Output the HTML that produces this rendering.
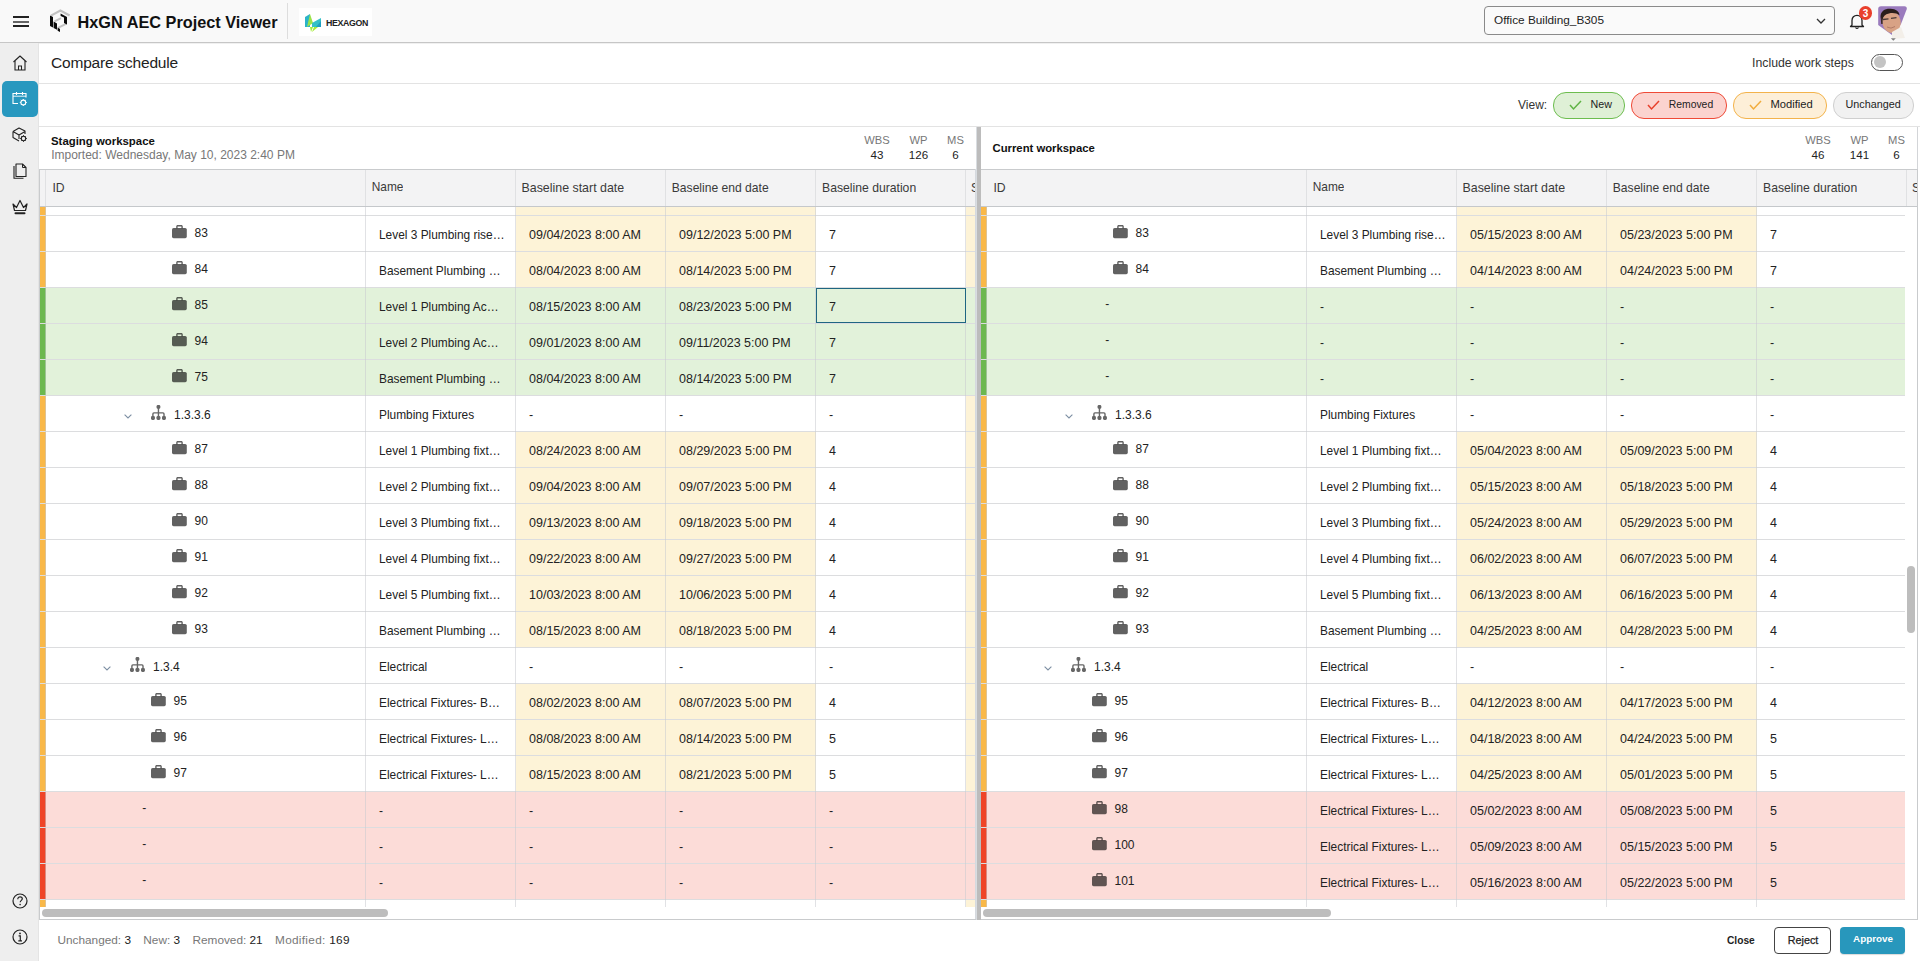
<!DOCTYPE html><html><head><meta charset="utf-8"><title>Compare schedule</title><style>
html,body{margin:0;padding:0;width:1920px;height:961px;overflow:hidden;background:#fff;font-family:"Liberation Sans", sans-serif;}
.t{position:absolute;white-space:nowrap;line-height:1;}
.r{position:absolute;}
svg{position:absolute;overflow:visible;}
</style></head><body>
<div class="r" style="left:0px;top:0px;width:1920px;height:42px;background:#f9f9f9;"></div>
<div class="r" style="left:0px;top:42px;width:1920px;height:1px;background:#c6c6c6;"></div>
<div class="r" style="left:0px;top:43px;width:1920px;height:1px;background:rgba(0,0,0,0.06);"></div>
<div class="r" style="left:13px;top:16px;width:16px;height:1.6px;background:#222;"></div>
<div class="r" style="left:13px;top:21px;width:16px;height:1.6px;background:#666;"></div>
<div class="r" style="left:13px;top:25px;width:16px;height:1.6px;background:#222;"></div>
<svg style="left:46px;top:6px" width="28" height="30" viewBox="0 0 28 30">
<polyline points="5,9.6 14.4,4.6 23.6,9.4" fill="none" stroke="#c2c2c2" stroke-width="2.2"/>
<line x1="8.5" y1="15.4" x2="15" y2="12.2" stroke="#c2c2c2" stroke-width="2"/>
<line x1="12" y1="21.8" x2="20.5" y2="17.6" stroke="#c2c2c2" stroke-width="2"/>
<polygon points="4,9.4 7,10.9 7,21.6 4,20.1" fill="#0a0a0a"/>
<polygon points="7.6,15.6 11,17.4 11,23.8 7.6,22.1" fill="#0a0a0a"/>
<polygon points="11.6,21.6 14,22.9 14,26 11.6,24.7" fill="#0a0a0a"/>
<polygon points="14.6,7.6 21,10.9 21,18.4 18,16.9 18,11.6 14.6,9.9" fill="#0a0a0a"/>
</svg>
<div class="t" style="left:77.5px;top:13.70px;font-size:16.3px;color:#111;font-weight:700;">HxGN AEC Project Viewer</div>
<div class="r" style="left:287px;top:3px;width:1px;height:36px;background:#dddddd;"></div>
<div class="r" style="left:299px;top:8px;width:73px;height:28px;background:#ffffff;"></div>
<svg style="left:305px;top:13px" width="17" height="19" viewBox="0 0 17 19">
<polygon points="0,4 5,1 5,14 0,14" fill="#2bb3c9"/>
<polygon points="5,1 2,14 8,10" fill="#9be34a"/>
<polygon points="7,10 16,5 16,14 7,14" fill="#35c0c8"/>
<polygon points="11,14 16,8 16,14" fill="#1e9fc2"/>
<polygon points="5,14 8,14 6,19" fill="#a6ec3a"/>
<polygon points="9,14 13,14 7,19" fill="#a6ec3a"/>
</svg>
<div class="t" style="left:326px;top:19.15px;font-size:8.8px;color:#222;font-weight:700;letter-spacing:-0.35px">HEXAGON</div>
<div class="r" style="left:1484px;top:6px;width:349px;height:27px;border:1.4px solid #8a8a8a;border-radius:4px;background:#fafafa"></div>
<div class="t" style="left:1494px;top:15.41px;font-size:11.8px;color:#222;font-weight:400;">Office Building_B305</div>
<svg style="left:1816px;top:18px" width="10" height="6" viewBox="0 0 10 6"><polyline points="1,1 5,5 9,1" fill="none" stroke="#333" stroke-width="1.3"/></svg>
<svg style="left:1849px;top:13px" width="16" height="17" viewBox="0 0 16 17">
<path d="M3,12 L3,7.5 C3,4.5 5,2.3 8,2.3 C11,2.3 13,4.5 13,7.5 L13,12 L14.5,13.5 L1.5,13.5 Z" fill="none" stroke="#222" stroke-width="1.3" stroke-linejoin="round"/>
<path d="M6.5,14.5 Q8,16.5 9.5,14.5" fill="none" stroke="#222" stroke-width="1.2"/>
</svg>
<div class="r" style="left:1859px;top:6px;width:13px;height:14px;border-radius:7px;background:#e9402c"></div>
<div class="t" style="left:1859.0px;width:13px;text-align:center;top:9.14px;font-size:10px;color:#fff;font-weight:700;">3</div>
<svg style="left:1872px;top:2px" width="40" height="40" viewBox="0 0 40 40">
<path d="M6.2,7 Q6.2,4.2 9,4.2 L32.5,4.2 Q35,4.2 34.8,7 L29,22 L20,33 L6.2,23 Z" fill="#9a7bbd"/>
<ellipse cx="19.5" cy="20" rx="9.2" ry="11" transform="rotate(-12 19.5 20)" fill="#d8a285"/>
<path d="M8.5,15 C8.5,9 13,6.5 18.5,6.8 C24,7 27.5,9.5 27.5,13.5 C25,11.3 21,10.6 17,11.5 C13,12.3 11,14.5 10.5,18 Z" fill="#2a1e1b"/>
<path d="M8.6,15 L9.2,22 L10.6,22 L10.6,16 Z" fill="#3a2a26"/>
<path d="M11,17.5 L16.5,16.8 M19,16.3 L24.5,15.6" stroke="#4a3a36" stroke-width="1.3"/>
<path d="M15,25 Q19,27.5 23,24.5" stroke="#b07a66" stroke-width="1" fill="none"/>
<path d="M20,30 L29,25 L33,36 L20,37 Z" fill="#f3efe9"/>
<polygon points="18.8,36.2 23.8,36.2 21.3,38.8" fill="#808080"/>
</svg>
<div class="r" style="left:0px;top:43px;width:39px;height:918px;background:#eeeeee;"></div>
<div class="r" style="left:38px;top:43px;width:1px;height:918px;background:#e4e4e4;"></div>
<svg style="left:12px;top:55px" width="16" height="16" viewBox="0 0 16 16">
<path d="M1.5,7 L8,1 L14.5,7" fill="none" stroke="#222" stroke-width="1.1" stroke-linejoin="round"/>
<path d="M3,6 L3,15 L13,15 L13,6" fill="none" stroke="#222" stroke-width="1.1"/>
<path d="M6.5,15 L6.5,11 L9.5,11 L9.5,15" fill="none" stroke="#222" stroke-width="1.05"/>
</svg>
<div class="r" style="left:2px;top:81px;width:36px;height:36px;border-radius:5px;background:#2898bf"></div>
<svg style="left:12px;top:91px" width="16" height="16" viewBox="0 0 16 16">
<path d="M6,12.5 L1,12.5 L1,2.5 L14,2.5 L14,6.5" fill="none" stroke="#fff" stroke-width="1.1"/>
<path d="M1,5.2 L14,5.2" stroke="#fff" stroke-width="0.9"/>
<path d="M4.5,1 L4.5,4 M10.5,1 L10.5,4" stroke="#fff" stroke-width="1.1"/>
<circle cx="11.3" cy="11.5" r="2.4" fill="none" stroke="#fff" stroke-width="1.1"/>
<path d="M11.3,8 L11.3,9 M11.3,14 L11.3,15 M7.8,11.5 L8.8,11.5 M13.8,11.5 L14.8,11.5 M8.8,9 L9.5,9.7 M13.1,13.3 L13.8,14 M8.8,14 L9.5,13.3 M13.1,9.7 L13.8,9" stroke="#fff" stroke-width="1"/>
</svg>
<svg style="left:12px;top:127px" width="16" height="16" viewBox="0 0 16 16">
<path d="M1,4.5 L7,1 L13,4 L13,7 M1,4.5 L1,10.5 L7,14 M1,4.5 L7,8 L13,4.5 M7,8 L7,12" fill="none" stroke="#222" stroke-width="1.1" stroke-linejoin="round"/>
<circle cx="11.5" cy="11.5" r="2.2" fill="none" stroke="#222" stroke-width="1.1"/>
<path d="M11.5,8.2 L11.5,9.1 M11.5,13.9 L11.5,14.8 M8.2,11.5 L9.1,11.5 M13.9,11.5 L14.8,11.5 M9.2,9.2 L9.8,9.8 M13.2,13.2 L13.8,13.8 M9.2,13.8 L9.8,13.2 M13.2,9.8 L13.8,9.2" stroke="#222" stroke-width="1"/>
</svg>
<svg style="left:13px;top:163px" width="14" height="16" viewBox="0 0 14 16">
<path d="M3,1 L9.5,1 L13,4.5 L13,13.5 L3,13.5 Z" fill="none" stroke="#222" stroke-width="1.1" stroke-linejoin="round"/>
<path d="M9.5,1 L9.5,4.5 L13,4.5" fill="none" stroke="#222" stroke-width="1"/>
<path d="M1,3 L1,15.2 L10.5,15.2" fill="none" stroke="#222" stroke-width="1.1"/>
</svg>
<svg style="left:12px;top:199px" width="16" height="16" viewBox="0 0 16 16">
<path d="M1,5 L4.5,8.5 L8,1.5 L11.5,8.5 L15,5 L13.5,11.5 L2.5,11.5 Z" fill="none" stroke="#222" stroke-width="1.2" stroke-linejoin="round"/>
<rect x="2.5" y="13.2" width="11" height="2" rx="1" fill="#222"/>
</svg>
<svg style="left:12px;top:893px" width="16" height="16" viewBox="0 0 16 16">
<circle cx="8" cy="8" r="7" fill="none" stroke="#222" stroke-width="1.2"/>
<path d="M5.8,6.2 C5.8,4.6 6.9,3.8 8.1,3.8 C9.4,3.8 10.3,4.7 10.3,5.8 C10.3,7.3 8.2,7.5 8.2,9.3" fill="none" stroke="#222" stroke-width="1.2"/>
<circle cx="8.1" cy="11.6" r="0.8" fill="#222"/>
</svg>
<svg style="left:12px;top:929px" width="16" height="16" viewBox="0 0 16 16">
<circle cx="8" cy="8" r="7" fill="none" stroke="#222" stroke-width="1.2"/>
<circle cx="8" cy="4.4" r="0.9" fill="#222"/>
<path d="M6.6,6.8 L8.3,6.8 L8.3,11.6 M6.3,11.8 L10,11.8" fill="none" stroke="#222" stroke-width="1.2"/>
</svg>
<div class="t" style="left:51px;top:54.68px;font-size:15.5px;color:#222;font-weight:400;letter-spacing:-0.2px">Compare schedule</div>
<div class="t" style="left:1752px;top:56.89px;font-size:12.3px;color:#333;font-weight:400;">Include work steps</div>
<div class="r" style="left:1871px;top:54px;width:30px;height:15px;border:1px solid #555;border-radius:9px;background:#fff"></div>
<div class="r" style="left:1874px;top:56px;width:12px;height:12px;border-radius:6px;background:#c4c4c4"></div>
<div class="r" style="left:39px;top:83px;width:1881px;height:1px;background:#e3e3e3;"></div>
<div class="t" style="left:1518px;top:98.84px;font-size:12px;color:#333;font-weight:400;">View:</div>
<div class="r" style="left:1553px;top:92px;width:70px;height:25px;border:1px solid #6dbd4f;border-radius:13px;background:#dff0d6;box-sizing:content-box"></div>
<svg style="left:1569px;top:100px" width="13" height="10" viewBox="0 0 13 10"><polyline points="1,5 4.5,9 12,1" fill="none" stroke="#5fb344" stroke-width="1.5"/></svg>
<div class="t" style="left:1590.6px;top:98.94px;font-size:10.7px;color:#222;font-weight:400;">New</div>
<div class="r" style="left:1631px;top:92px;width:94px;height:25px;border:1px solid #ef4a37;border-radius:13px;background:#fbd3cf;box-sizing:content-box"></div>
<svg style="left:1647px;top:100px" width="13" height="10" viewBox="0 0 13 10"><polyline points="1,5 4.5,9 12,1" fill="none" stroke="#e8402c" stroke-width="1.5"/></svg>
<div class="t" style="left:1668.7px;top:100.00px;font-size:10.4px;color:#222;font-weight:400;">Removed</div>
<div class="r" style="left:1733px;top:92px;width:92px;height:25px;border:1px solid #f3b34b;border-radius:13px;background:#fdefd8;box-sizing:content-box"></div>
<svg style="left:1749px;top:100px" width="13" height="10" viewBox="0 0 13 10"><polyline points="1,5 4.5,9 12,1" fill="none" stroke="#f1ac3c" stroke-width="1.5"/></svg>
<div class="t" style="left:1770.5px;top:98.82px;font-size:11.2px;color:#222;font-weight:400;">Modified</div>
<div class="r" style="left:1833px;top:92px;width:79px;height:25px;border:1px solid #cfcfcf;border-radius:13px;background:#f1f1f1;box-sizing:content-box"></div>
<div class="t" style="left:1845.5px;top:98.86px;font-size:10.8px;color:#222;font-weight:400;">Unchanged</div>
<div class="r" style="left:39px;top:126px;width:1881px;height:1px;background:#e3e3e3;"></div>
<div class="t" style="left:51px;top:136.35px;font-size:11.4px;color:#111;font-weight:700;">Staging workspace</div>
<div class="t" style="left:51.2px;top:149.34px;font-size:12px;color:#777;font-weight:400;">Imported: Wednesday, May 10, 2023 2:40 PM</div>
<div class="t" style="left:857.0px;width:40px;text-align:center;top:135.12px;font-size:11.2px;color:#777;font-weight:400;">WBS</div>
<div class="t" style="left:857.0px;width:40px;text-align:center;top:148.98px;font-size:11.6px;color:#222;font-weight:400;">43</div>
<div class="t" style="left:898.5px;width:40px;text-align:center;top:135.12px;font-size:11.2px;color:#777;font-weight:400;">WP</div>
<div class="t" style="left:898.5px;width:40px;text-align:center;top:148.98px;font-size:11.6px;color:#222;font-weight:400;">126</div>
<div class="t" style="left:935.5px;width:40px;text-align:center;top:135.12px;font-size:11.2px;color:#777;font-weight:400;">MS</div>
<div class="t" style="left:935.5px;width:40px;text-align:center;top:148.98px;font-size:11.6px;color:#222;font-weight:400;">6</div>
<div class="t" style="left:992.5px;top:143.03px;font-size:11.3px;color:#111;font-weight:700;">Current workspace</div>
<div class="t" style="left:1798.0px;width:40px;text-align:center;top:135.12px;font-size:11.2px;color:#777;font-weight:400;">WBS</div>
<div class="t" style="left:1798.0px;width:40px;text-align:center;top:148.98px;font-size:11.6px;color:#222;font-weight:400;">46</div>
<div class="t" style="left:1839.5px;width:40px;text-align:center;top:135.12px;font-size:11.2px;color:#777;font-weight:400;">WP</div>
<div class="t" style="left:1839.5px;width:40px;text-align:center;top:148.98px;font-size:11.6px;color:#222;font-weight:400;">141</div>
<div class="t" style="left:1876.5px;width:40px;text-align:center;top:135.12px;font-size:11.2px;color:#777;font-weight:400;">MS</div>
<div class="t" style="left:1876.5px;width:40px;text-align:center;top:148.98px;font-size:11.6px;color:#222;font-weight:400;">6</div>
<div class="r" style="left:39px;top:169px;width:937px;height:1px;background:#c9cbcd;"></div>
<div class="r" style="left:40px;top:170px;width:935px;height:36px;background:#f3f3f4;"></div>
<div class="r" style="left:39px;top:206px;width:937px;height:1px;background:#c5c8cb;"></div>
<div class="r" style="left:45px;top:170px;width:1px;height:36px;background:#e0e1e3;"></div>
<div class="r" style="left:365px;top:170px;width:1px;height:36px;background:#e0e1e3;"></div>
<div class="r" style="left:515px;top:170px;width:1px;height:36px;background:#e0e1e3;"></div>
<div class="r" style="left:665px;top:170px;width:1px;height:36px;background:#e0e1e3;"></div>
<div class="r" style="left:815px;top:170px;width:1px;height:36px;background:#e0e1e3;"></div>
<div class="r" style="left:965px;top:170px;width:1px;height:36px;background:#e0e1e3;"></div>
<div class="t" style="left:52.4px;top:181.67px;font-size:12.2px;color:#3a3a3a;font-weight:400;overflow:hidden;max-width:922.6px">ID</div>
<div class="t" style="left:371.7px;top:181.93px;font-size:11.9px;color:#3a3a3a;font-weight:400;overflow:hidden;max-width:603.3px">Name</div>
<div class="t" style="left:521.5px;top:181.50px;font-size:12.4px;color:#3a3a3a;font-weight:400;overflow:hidden;max-width:453.5px">Baseline start date</div>
<div class="t" style="left:671.8px;top:181.76px;font-size:12.1px;color:#3a3a3a;font-weight:400;overflow:hidden;max-width:303.20000000000005px">Baseline end date</div>
<div class="t" style="left:822px;top:181.67px;font-size:12.2px;color:#3a3a3a;font-weight:400;overflow:hidden;max-width:153px">Baseline duration</div>
<div class="t" style="left:971px;top:181.67px;font-size:12.2px;color:#3a3a3a;font-weight:400;overflow:hidden;max-width:4px">Start</div>
<div class="r" style="left:40px;top:207px;width:6px;height:8px;background:#f9b848;"></div>
<div class="r" style="left:516px;top:207px;width:300px;height:8px;background:#fdf3d7;"></div>
<div class="r" style="left:966px;top:207px;width:10px;height:8px;background:#fdf3d7;"></div>
<div class="r" style="left:40px;top:215px;width:936px;height:1px;background:#dcdddf;"></div>
<div class="r" style="left:40px;top:216px;width:6px;height:35px;background:#f9b848;"></div>
<div class="r" style="left:516px;top:216px;width:300px;height:35px;background:#fdf3d7;"></div>
<div class="r" style="left:966px;top:216px;width:10px;height:35px;background:#fdf3d7;"></div>
<div class="r" style="left:40px;top:251px;width:936px;height:1px;background:#dcdddf;"></div>
<svg style="left:171.6px;top:225.4px" width="15" height="14" viewBox="0 0 15 14"><path d="M4.2,3.2 L4.2,1.6 C4.2,0.6 4.8,0 5.8,0 L9.2,0 C10.2,0 10.8,0.6 10.8,1.6 L10.8,3.2 L9.4,3.2 L9.4,1.4 L5.6,1.4 L5.6,3.2 Z" fill="rgba(0,0,0,0.62)"/><rect x="0" y="2.9" width="14.8" height="10.3" rx="1.6" fill="rgba(0,0,0,0.62)"/></svg>
<div class="t" style="left:194.5px;top:226.64px;font-size:12px;color:#222;font-weight:400;">83</div>
<div class="t" style="left:379px;top:229.93px;font-size:11.9px;color:#222;font-weight:400;">Level 3 Plumbing rise…</div>
<div class="t" style="left:529px;top:228.62px;font-size:12.5px;color:#222;font-weight:400;">09/04/2023 8:00 AM</div>
<div class="t" style="left:679px;top:228.62px;font-size:12.5px;color:#222;font-weight:400;">09/12/2023 5:00 PM</div>
<div class="t" style="left:829px;top:228.62px;font-size:12.5px;color:#222;font-weight:400;">7</div>
<div class="r" style="left:40px;top:252px;width:6px;height:35px;background:#f9b848;"></div>
<div class="r" style="left:516px;top:252px;width:300px;height:35px;background:#fdf3d7;"></div>
<div class="r" style="left:966px;top:252px;width:10px;height:35px;background:#fdf3d7;"></div>
<div class="r" style="left:40px;top:287px;width:936px;height:1px;background:#dcdddf;"></div>
<svg style="left:171.6px;top:261.4px" width="15" height="14" viewBox="0 0 15 14"><path d="M4.2,3.2 L4.2,1.6 C4.2,0.6 4.8,0 5.8,0 L9.2,0 C10.2,0 10.8,0.6 10.8,1.6 L10.8,3.2 L9.4,3.2 L9.4,1.4 L5.6,1.4 L5.6,3.2 Z" fill="rgba(0,0,0,0.62)"/><rect x="0" y="2.9" width="14.8" height="10.3" rx="1.6" fill="rgba(0,0,0,0.62)"/></svg>
<div class="t" style="left:194.5px;top:262.64px;font-size:12px;color:#222;font-weight:400;">84</div>
<div class="t" style="left:379px;top:265.93px;font-size:11.9px;color:#222;font-weight:400;">Basement Plumbing …</div>
<div class="t" style="left:529px;top:264.62px;font-size:12.5px;color:#222;font-weight:400;">08/04/2023 8:00 AM</div>
<div class="t" style="left:679px;top:264.62px;font-size:12.5px;color:#222;font-weight:400;">08/14/2023 5:00 PM</div>
<div class="t" style="left:829px;top:264.62px;font-size:12.5px;color:#222;font-weight:400;">7</div>
<div class="r" style="left:40px;top:288px;width:936px;height:35px;background:#e2f2da;"></div>
<div class="r" style="left:40px;top:288px;width:6px;height:35px;background:#6cb84f;"></div>
<div class="r" style="left:40px;top:323px;width:936px;height:1px;background:#dcdddf;"></div>
<svg style="left:171.6px;top:297.4px" width="15" height="14" viewBox="0 0 15 14"><path d="M4.2,3.2 L4.2,1.6 C4.2,0.6 4.8,0 5.8,0 L9.2,0 C10.2,0 10.8,0.6 10.8,1.6 L10.8,3.2 L9.4,3.2 L9.4,1.4 L5.6,1.4 L5.6,3.2 Z" fill="rgba(0,0,0,0.62)"/><rect x="0" y="2.9" width="14.8" height="10.3" rx="1.6" fill="rgba(0,0,0,0.62)"/></svg>
<div class="t" style="left:194.5px;top:298.64px;font-size:12px;color:#222;font-weight:400;">85</div>
<div class="t" style="left:379px;top:301.93px;font-size:11.9px;color:#222;font-weight:400;">Level 1 Plumbing Ac…</div>
<div class="t" style="left:529px;top:300.62px;font-size:12.5px;color:#222;font-weight:400;">08/15/2023 8:00 AM</div>
<div class="t" style="left:679px;top:300.62px;font-size:12.5px;color:#222;font-weight:400;">08/23/2023 5:00 PM</div>
<div class="t" style="left:829px;top:300.62px;font-size:12.5px;color:#222;font-weight:400;">7</div>
<div class="r" style="left:40px;top:324px;width:936px;height:35px;background:#e2f2da;"></div>
<div class="r" style="left:40px;top:324px;width:6px;height:35px;background:#6cb84f;"></div>
<div class="r" style="left:40px;top:359px;width:936px;height:1px;background:#dcdddf;"></div>
<svg style="left:171.6px;top:333.4px" width="15" height="14" viewBox="0 0 15 14"><path d="M4.2,3.2 L4.2,1.6 C4.2,0.6 4.8,0 5.8,0 L9.2,0 C10.2,0 10.8,0.6 10.8,1.6 L10.8,3.2 L9.4,3.2 L9.4,1.4 L5.6,1.4 L5.6,3.2 Z" fill="rgba(0,0,0,0.62)"/><rect x="0" y="2.9" width="14.8" height="10.3" rx="1.6" fill="rgba(0,0,0,0.62)"/></svg>
<div class="t" style="left:194.5px;top:334.64px;font-size:12px;color:#222;font-weight:400;">94</div>
<div class="t" style="left:379px;top:337.93px;font-size:11.9px;color:#222;font-weight:400;">Level 2 Plumbing Ac…</div>
<div class="t" style="left:529px;top:336.62px;font-size:12.5px;color:#222;font-weight:400;">09/01/2023 8:00 AM</div>
<div class="t" style="left:679px;top:336.62px;font-size:12.5px;color:#222;font-weight:400;">09/11/2023 5:00 PM</div>
<div class="t" style="left:829px;top:336.62px;font-size:12.5px;color:#222;font-weight:400;">7</div>
<div class="r" style="left:40px;top:360px;width:936px;height:35px;background:#e2f2da;"></div>
<div class="r" style="left:40px;top:360px;width:6px;height:35px;background:#6cb84f;"></div>
<div class="r" style="left:40px;top:395px;width:936px;height:1px;background:#dcdddf;"></div>
<svg style="left:171.6px;top:369.4px" width="15" height="14" viewBox="0 0 15 14"><path d="M4.2,3.2 L4.2,1.6 C4.2,0.6 4.8,0 5.8,0 L9.2,0 C10.2,0 10.8,0.6 10.8,1.6 L10.8,3.2 L9.4,3.2 L9.4,1.4 L5.6,1.4 L5.6,3.2 Z" fill="rgba(0,0,0,0.62)"/><rect x="0" y="2.9" width="14.8" height="10.3" rx="1.6" fill="rgba(0,0,0,0.62)"/></svg>
<div class="t" style="left:194.5px;top:370.64px;font-size:12px;color:#222;font-weight:400;">75</div>
<div class="t" style="left:379px;top:373.93px;font-size:11.9px;color:#222;font-weight:400;">Basement Plumbing …</div>
<div class="t" style="left:529px;top:372.62px;font-size:12.5px;color:#222;font-weight:400;">08/04/2023 8:00 AM</div>
<div class="t" style="left:679px;top:372.62px;font-size:12.5px;color:#222;font-weight:400;">08/14/2023 5:00 PM</div>
<div class="t" style="left:829px;top:372.62px;font-size:12.5px;color:#222;font-weight:400;">7</div>
<div class="r" style="left:40px;top:396px;width:6px;height:35px;background:#f9b848;"></div>
<div class="r" style="left:966px;top:396px;width:10px;height:35px;background:#fdf3d7;"></div>
<div class="r" style="left:40px;top:431px;width:936px;height:1px;background:#dcdddf;"></div>
<svg style="left:124.3px;top:413.6px" width="8" height="5" viewBox="0 0 8 5"><polyline points="0.6,0.6 4,4 7.4,0.6" fill="none" stroke="#7d8fa3" stroke-width="1.1"/></svg>
<svg style="left:150.5px;top:405.4px" width="16" height="16" viewBox="0 0 16 16"><rect x="5.6" y="0" width="3.7" height="3.7" rx="1.3" fill="#666"/><rect x="6.75" y="2" width="1.4" height="10" fill="#666"/><path d="M1.9,11.5 L1.9,8.9 Q1.9,7.9 2.9,7.9 L12,7.9 Q13,7.9 13,8.9 L13,11.5" fill="none" stroke="#666" stroke-width="1.4"/><rect x="0" y="11" width="3.9" height="3.9" rx="1.3" fill="#666"/><rect x="5.5" y="11" width="3.9" height="3.9" rx="1.3" fill="#666"/><rect x="11" y="11" width="3.9" height="3.9" rx="1.3" fill="#666"/></svg>
<div class="t" style="left:174px;top:408.84px;font-size:12px;color:#222;font-weight:400;">1.3.3.6</div>
<div class="t" style="left:379px;top:409.93px;font-size:11.9px;color:#222;font-weight:400;">Plumbing Fixtures</div>
<div class="t" style="left:529px;top:408.62px;font-size:12.5px;color:#222;font-weight:400;">-</div>
<div class="t" style="left:679px;top:408.62px;font-size:12.5px;color:#222;font-weight:400;">-</div>
<div class="t" style="left:829px;top:408.62px;font-size:12.5px;color:#222;font-weight:400;">-</div>
<div class="r" style="left:40px;top:432px;width:6px;height:35px;background:#f9b848;"></div>
<div class="r" style="left:516px;top:432px;width:300px;height:35px;background:#fdf3d7;"></div>
<div class="r" style="left:966px;top:432px;width:10px;height:35px;background:#fdf3d7;"></div>
<div class="r" style="left:40px;top:467px;width:936px;height:1px;background:#dcdddf;"></div>
<svg style="left:171.6px;top:441.4px" width="15" height="14" viewBox="0 0 15 14"><path d="M4.2,3.2 L4.2,1.6 C4.2,0.6 4.8,0 5.8,0 L9.2,0 C10.2,0 10.8,0.6 10.8,1.6 L10.8,3.2 L9.4,3.2 L9.4,1.4 L5.6,1.4 L5.6,3.2 Z" fill="rgba(0,0,0,0.62)"/><rect x="0" y="2.9" width="14.8" height="10.3" rx="1.6" fill="rgba(0,0,0,0.62)"/></svg>
<div class="t" style="left:194.5px;top:442.64px;font-size:12px;color:#222;font-weight:400;">87</div>
<div class="t" style="left:379px;top:445.93px;font-size:11.9px;color:#222;font-weight:400;">Level 1 Plumbing fixt…</div>
<div class="t" style="left:529px;top:444.62px;font-size:12.5px;color:#222;font-weight:400;">08/24/2023 8:00 AM</div>
<div class="t" style="left:679px;top:444.62px;font-size:12.5px;color:#222;font-weight:400;">08/29/2023 5:00 PM</div>
<div class="t" style="left:829px;top:444.62px;font-size:12.5px;color:#222;font-weight:400;">4</div>
<div class="r" style="left:40px;top:468px;width:6px;height:35px;background:#f9b848;"></div>
<div class="r" style="left:516px;top:468px;width:300px;height:35px;background:#fdf3d7;"></div>
<div class="r" style="left:966px;top:468px;width:10px;height:35px;background:#fdf3d7;"></div>
<div class="r" style="left:40px;top:503px;width:936px;height:1px;background:#dcdddf;"></div>
<svg style="left:171.6px;top:477.4px" width="15" height="14" viewBox="0 0 15 14"><path d="M4.2,3.2 L4.2,1.6 C4.2,0.6 4.8,0 5.8,0 L9.2,0 C10.2,0 10.8,0.6 10.8,1.6 L10.8,3.2 L9.4,3.2 L9.4,1.4 L5.6,1.4 L5.6,3.2 Z" fill="rgba(0,0,0,0.62)"/><rect x="0" y="2.9" width="14.8" height="10.3" rx="1.6" fill="rgba(0,0,0,0.62)"/></svg>
<div class="t" style="left:194.5px;top:478.64px;font-size:12px;color:#222;font-weight:400;">88</div>
<div class="t" style="left:379px;top:481.93px;font-size:11.9px;color:#222;font-weight:400;">Level 2 Plumbing fixt…</div>
<div class="t" style="left:529px;top:480.62px;font-size:12.5px;color:#222;font-weight:400;">09/04/2023 8:00 AM</div>
<div class="t" style="left:679px;top:480.62px;font-size:12.5px;color:#222;font-weight:400;">09/07/2023 5:00 PM</div>
<div class="t" style="left:829px;top:480.62px;font-size:12.5px;color:#222;font-weight:400;">4</div>
<div class="r" style="left:40px;top:504px;width:6px;height:35px;background:#f9b848;"></div>
<div class="r" style="left:516px;top:504px;width:300px;height:35px;background:#fdf3d7;"></div>
<div class="r" style="left:966px;top:504px;width:10px;height:35px;background:#fdf3d7;"></div>
<div class="r" style="left:40px;top:539px;width:936px;height:1px;background:#dcdddf;"></div>
<svg style="left:171.6px;top:513.4px" width="15" height="14" viewBox="0 0 15 14"><path d="M4.2,3.2 L4.2,1.6 C4.2,0.6 4.8,0 5.8,0 L9.2,0 C10.2,0 10.8,0.6 10.8,1.6 L10.8,3.2 L9.4,3.2 L9.4,1.4 L5.6,1.4 L5.6,3.2 Z" fill="rgba(0,0,0,0.62)"/><rect x="0" y="2.9" width="14.8" height="10.3" rx="1.6" fill="rgba(0,0,0,0.62)"/></svg>
<div class="t" style="left:194.5px;top:514.64px;font-size:12px;color:#222;font-weight:400;">90</div>
<div class="t" style="left:379px;top:517.93px;font-size:11.9px;color:#222;font-weight:400;">Level 3 Plumbing fixt…</div>
<div class="t" style="left:529px;top:516.62px;font-size:12.5px;color:#222;font-weight:400;">09/13/2023 8:00 AM</div>
<div class="t" style="left:679px;top:516.62px;font-size:12.5px;color:#222;font-weight:400;">09/18/2023 5:00 PM</div>
<div class="t" style="left:829px;top:516.62px;font-size:12.5px;color:#222;font-weight:400;">4</div>
<div class="r" style="left:40px;top:540px;width:6px;height:35px;background:#f9b848;"></div>
<div class="r" style="left:516px;top:540px;width:300px;height:35px;background:#fdf3d7;"></div>
<div class="r" style="left:966px;top:540px;width:10px;height:35px;background:#fdf3d7;"></div>
<div class="r" style="left:40px;top:575px;width:936px;height:1px;background:#dcdddf;"></div>
<svg style="left:171.6px;top:549.4px" width="15" height="14" viewBox="0 0 15 14"><path d="M4.2,3.2 L4.2,1.6 C4.2,0.6 4.8,0 5.8,0 L9.2,0 C10.2,0 10.8,0.6 10.8,1.6 L10.8,3.2 L9.4,3.2 L9.4,1.4 L5.6,1.4 L5.6,3.2 Z" fill="rgba(0,0,0,0.62)"/><rect x="0" y="2.9" width="14.8" height="10.3" rx="1.6" fill="rgba(0,0,0,0.62)"/></svg>
<div class="t" style="left:194.5px;top:550.64px;font-size:12px;color:#222;font-weight:400;">91</div>
<div class="t" style="left:379px;top:553.93px;font-size:11.9px;color:#222;font-weight:400;">Level 4 Plumbing fixt…</div>
<div class="t" style="left:529px;top:552.62px;font-size:12.5px;color:#222;font-weight:400;">09/22/2023 8:00 AM</div>
<div class="t" style="left:679px;top:552.62px;font-size:12.5px;color:#222;font-weight:400;">09/27/2023 5:00 PM</div>
<div class="t" style="left:829px;top:552.62px;font-size:12.5px;color:#222;font-weight:400;">4</div>
<div class="r" style="left:40px;top:576px;width:6px;height:35px;background:#f9b848;"></div>
<div class="r" style="left:516px;top:576px;width:300px;height:35px;background:#fdf3d7;"></div>
<div class="r" style="left:966px;top:576px;width:10px;height:35px;background:#fdf3d7;"></div>
<div class="r" style="left:40px;top:611px;width:936px;height:1px;background:#dcdddf;"></div>
<svg style="left:171.6px;top:585.4px" width="15" height="14" viewBox="0 0 15 14"><path d="M4.2,3.2 L4.2,1.6 C4.2,0.6 4.8,0 5.8,0 L9.2,0 C10.2,0 10.8,0.6 10.8,1.6 L10.8,3.2 L9.4,3.2 L9.4,1.4 L5.6,1.4 L5.6,3.2 Z" fill="rgba(0,0,0,0.62)"/><rect x="0" y="2.9" width="14.8" height="10.3" rx="1.6" fill="rgba(0,0,0,0.62)"/></svg>
<div class="t" style="left:194.5px;top:586.64px;font-size:12px;color:#222;font-weight:400;">92</div>
<div class="t" style="left:379px;top:589.93px;font-size:11.9px;color:#222;font-weight:400;">Level 5 Plumbing fixt…</div>
<div class="t" style="left:529px;top:588.62px;font-size:12.5px;color:#222;font-weight:400;">10/03/2023 8:00 AM</div>
<div class="t" style="left:679px;top:588.62px;font-size:12.5px;color:#222;font-weight:400;">10/06/2023 5:00 PM</div>
<div class="t" style="left:829px;top:588.62px;font-size:12.5px;color:#222;font-weight:400;">4</div>
<div class="r" style="left:40px;top:612px;width:6px;height:35px;background:#f9b848;"></div>
<div class="r" style="left:516px;top:612px;width:300px;height:35px;background:#fdf3d7;"></div>
<div class="r" style="left:966px;top:612px;width:10px;height:35px;background:#fdf3d7;"></div>
<div class="r" style="left:40px;top:647px;width:936px;height:1px;background:#dcdddf;"></div>
<svg style="left:171.6px;top:621.4px" width="15" height="14" viewBox="0 0 15 14"><path d="M4.2,3.2 L4.2,1.6 C4.2,0.6 4.8,0 5.8,0 L9.2,0 C10.2,0 10.8,0.6 10.8,1.6 L10.8,3.2 L9.4,3.2 L9.4,1.4 L5.6,1.4 L5.6,3.2 Z" fill="rgba(0,0,0,0.62)"/><rect x="0" y="2.9" width="14.8" height="10.3" rx="1.6" fill="rgba(0,0,0,0.62)"/></svg>
<div class="t" style="left:194.5px;top:622.64px;font-size:12px;color:#222;font-weight:400;">93</div>
<div class="t" style="left:379px;top:625.93px;font-size:11.9px;color:#222;font-weight:400;">Basement Plumbing …</div>
<div class="t" style="left:529px;top:624.62px;font-size:12.5px;color:#222;font-weight:400;">08/15/2023 8:00 AM</div>
<div class="t" style="left:679px;top:624.62px;font-size:12.5px;color:#222;font-weight:400;">08/18/2023 5:00 PM</div>
<div class="t" style="left:829px;top:624.62px;font-size:12.5px;color:#222;font-weight:400;">4</div>
<div class="r" style="left:40px;top:648px;width:6px;height:35px;background:#f9b848;"></div>
<div class="r" style="left:966px;top:648px;width:10px;height:35px;background:#fdf3d7;"></div>
<div class="r" style="left:40px;top:683px;width:936px;height:1px;background:#dcdddf;"></div>
<svg style="left:103.3px;top:665.6px" width="8" height="5" viewBox="0 0 8 5"><polyline points="0.6,0.6 4,4 7.4,0.6" fill="none" stroke="#7d8fa3" stroke-width="1.1"/></svg>
<svg style="left:129.5px;top:657.4px" width="16" height="16" viewBox="0 0 16 16"><rect x="5.6" y="0" width="3.7" height="3.7" rx="1.3" fill="#666"/><rect x="6.75" y="2" width="1.4" height="10" fill="#666"/><path d="M1.9,11.5 L1.9,8.9 Q1.9,7.9 2.9,7.9 L12,7.9 Q13,7.9 13,8.9 L13,11.5" fill="none" stroke="#666" stroke-width="1.4"/><rect x="0" y="11" width="3.9" height="3.9" rx="1.3" fill="#666"/><rect x="5.5" y="11" width="3.9" height="3.9" rx="1.3" fill="#666"/><rect x="11" y="11" width="3.9" height="3.9" rx="1.3" fill="#666"/></svg>
<div class="t" style="left:153px;top:660.84px;font-size:12px;color:#222;font-weight:400;">1.3.4</div>
<div class="t" style="left:379px;top:661.93px;font-size:11.9px;color:#222;font-weight:400;">Electrical</div>
<div class="t" style="left:529px;top:660.62px;font-size:12.5px;color:#222;font-weight:400;">-</div>
<div class="t" style="left:679px;top:660.62px;font-size:12.5px;color:#222;font-weight:400;">-</div>
<div class="t" style="left:829px;top:660.62px;font-size:12.5px;color:#222;font-weight:400;">-</div>
<div class="r" style="left:40px;top:684px;width:6px;height:35px;background:#f9b848;"></div>
<div class="r" style="left:516px;top:684px;width:300px;height:35px;background:#fdf3d7;"></div>
<div class="r" style="left:966px;top:684px;width:10px;height:35px;background:#fdf3d7;"></div>
<div class="r" style="left:40px;top:719px;width:936px;height:1px;background:#dcdddf;"></div>
<svg style="left:150.6px;top:693.4px" width="15" height="14" viewBox="0 0 15 14"><path d="M4.2,3.2 L4.2,1.6 C4.2,0.6 4.8,0 5.8,0 L9.2,0 C10.2,0 10.8,0.6 10.8,1.6 L10.8,3.2 L9.4,3.2 L9.4,1.4 L5.6,1.4 L5.6,3.2 Z" fill="rgba(0,0,0,0.62)"/><rect x="0" y="2.9" width="14.8" height="10.3" rx="1.6" fill="rgba(0,0,0,0.62)"/></svg>
<div class="t" style="left:173.5px;top:694.64px;font-size:12px;color:#222;font-weight:400;">95</div>
<div class="t" style="left:379px;top:697.93px;font-size:11.9px;color:#222;font-weight:400;">Electrical Fixtures- B…</div>
<div class="t" style="left:529px;top:696.62px;font-size:12.5px;color:#222;font-weight:400;">08/02/2023 8:00 AM</div>
<div class="t" style="left:679px;top:696.62px;font-size:12.5px;color:#222;font-weight:400;">08/07/2023 5:00 PM</div>
<div class="t" style="left:829px;top:696.62px;font-size:12.5px;color:#222;font-weight:400;">4</div>
<div class="r" style="left:40px;top:720px;width:6px;height:35px;background:#f9b848;"></div>
<div class="r" style="left:516px;top:720px;width:300px;height:35px;background:#fdf3d7;"></div>
<div class="r" style="left:966px;top:720px;width:10px;height:35px;background:#fdf3d7;"></div>
<div class="r" style="left:40px;top:755px;width:936px;height:1px;background:#dcdddf;"></div>
<svg style="left:150.6px;top:729.4px" width="15" height="14" viewBox="0 0 15 14"><path d="M4.2,3.2 L4.2,1.6 C4.2,0.6 4.8,0 5.8,0 L9.2,0 C10.2,0 10.8,0.6 10.8,1.6 L10.8,3.2 L9.4,3.2 L9.4,1.4 L5.6,1.4 L5.6,3.2 Z" fill="rgba(0,0,0,0.62)"/><rect x="0" y="2.9" width="14.8" height="10.3" rx="1.6" fill="rgba(0,0,0,0.62)"/></svg>
<div class="t" style="left:173.5px;top:730.64px;font-size:12px;color:#222;font-weight:400;">96</div>
<div class="t" style="left:379px;top:733.93px;font-size:11.9px;color:#222;font-weight:400;">Electrical Fixtures- L…</div>
<div class="t" style="left:529px;top:732.62px;font-size:12.5px;color:#222;font-weight:400;">08/08/2023 8:00 AM</div>
<div class="t" style="left:679px;top:732.62px;font-size:12.5px;color:#222;font-weight:400;">08/14/2023 5:00 PM</div>
<div class="t" style="left:829px;top:732.62px;font-size:12.5px;color:#222;font-weight:400;">5</div>
<div class="r" style="left:40px;top:756px;width:6px;height:35px;background:#f9b848;"></div>
<div class="r" style="left:516px;top:756px;width:300px;height:35px;background:#fdf3d7;"></div>
<div class="r" style="left:966px;top:756px;width:10px;height:35px;background:#fdf3d7;"></div>
<div class="r" style="left:40px;top:791px;width:936px;height:1px;background:#dcdddf;"></div>
<svg style="left:150.6px;top:765.4px" width="15" height="14" viewBox="0 0 15 14"><path d="M4.2,3.2 L4.2,1.6 C4.2,0.6 4.8,0 5.8,0 L9.2,0 C10.2,0 10.8,0.6 10.8,1.6 L10.8,3.2 L9.4,3.2 L9.4,1.4 L5.6,1.4 L5.6,3.2 Z" fill="rgba(0,0,0,0.62)"/><rect x="0" y="2.9" width="14.8" height="10.3" rx="1.6" fill="rgba(0,0,0,0.62)"/></svg>
<div class="t" style="left:173.5px;top:766.64px;font-size:12px;color:#222;font-weight:400;">97</div>
<div class="t" style="left:379px;top:769.93px;font-size:11.9px;color:#222;font-weight:400;">Electrical Fixtures- L…</div>
<div class="t" style="left:529px;top:768.62px;font-size:12.5px;color:#222;font-weight:400;">08/15/2023 8:00 AM</div>
<div class="t" style="left:679px;top:768.62px;font-size:12.5px;color:#222;font-weight:400;">08/21/2023 5:00 PM</div>
<div class="t" style="left:829px;top:768.62px;font-size:12.5px;color:#222;font-weight:400;">5</div>
<div class="r" style="left:40px;top:792px;width:936px;height:35px;background:#fcdcd8;"></div>
<div class="r" style="left:40px;top:792px;width:6px;height:35px;background:#ef4427;"></div>
<div class="r" style="left:40px;top:827px;width:936px;height:1px;background:#dcdddf;"></div>
<div class="t" style="left:142.3px;top:802.44px;font-size:12px;color:#222;font-weight:400;">-</div>
<div class="t" style="left:379px;top:805.04px;font-size:12px;color:#222;font-weight:400;">-</div>
<div class="t" style="left:529px;top:804.62px;font-size:12.5px;color:#222;font-weight:400;">-</div>
<div class="t" style="left:679px;top:804.62px;font-size:12.5px;color:#222;font-weight:400;">-</div>
<div class="t" style="left:829px;top:804.62px;font-size:12.5px;color:#222;font-weight:400;">-</div>
<div class="r" style="left:40px;top:828px;width:936px;height:35px;background:#fcdcd8;"></div>
<div class="r" style="left:40px;top:828px;width:6px;height:35px;background:#ef4427;"></div>
<div class="r" style="left:40px;top:863px;width:936px;height:1px;background:#dcdddf;"></div>
<div class="t" style="left:142.3px;top:838.44px;font-size:12px;color:#222;font-weight:400;">-</div>
<div class="t" style="left:379px;top:841.04px;font-size:12px;color:#222;font-weight:400;">-</div>
<div class="t" style="left:529px;top:840.62px;font-size:12.5px;color:#222;font-weight:400;">-</div>
<div class="t" style="left:679px;top:840.62px;font-size:12.5px;color:#222;font-weight:400;">-</div>
<div class="t" style="left:829px;top:840.62px;font-size:12.5px;color:#222;font-weight:400;">-</div>
<div class="r" style="left:40px;top:864px;width:936px;height:35px;background:#fcdcd8;"></div>
<div class="r" style="left:40px;top:864px;width:6px;height:35px;background:#ef4427;"></div>
<div class="r" style="left:40px;top:899px;width:936px;height:1px;background:#dcdddf;"></div>
<div class="t" style="left:142.3px;top:874.44px;font-size:12px;color:#222;font-weight:400;">-</div>
<div class="t" style="left:379px;top:877.04px;font-size:12px;color:#222;font-weight:400;">-</div>
<div class="t" style="left:529px;top:876.62px;font-size:12.5px;color:#222;font-weight:400;">-</div>
<div class="t" style="left:679px;top:876.62px;font-size:12.5px;color:#222;font-weight:400;">-</div>
<div class="t" style="left:829px;top:876.62px;font-size:12.5px;color:#222;font-weight:400;">-</div>
<div class="r" style="left:40px;top:900px;width:6px;height:7px;background:#f9b848;"></div>
<div class="r" style="left:966px;top:900px;width:10px;height:7px;background:#fdf3d7;"></div>
<div class="r" style="left:45px;top:207px;width:1px;height:700px;background:rgba(200,203,207,0.55);"></div>
<div class="r" style="left:365px;top:207px;width:1px;height:700px;background:rgba(200,203,207,0.55);"></div>
<div class="r" style="left:515px;top:207px;width:1px;height:700px;background:rgba(200,203,207,0.55);"></div>
<div class="r" style="left:665px;top:207px;width:1px;height:700px;background:rgba(200,203,207,0.55);"></div>
<div class="r" style="left:815px;top:207px;width:1px;height:700px;background:rgba(200,203,207,0.55);"></div>
<div class="r" style="left:965px;top:207px;width:1px;height:700px;background:rgba(200,203,207,0.55);"></div>
<div class="r" style="left:816px;top:288px;width:148px;height:33px;border:1px solid #1f6682"></div>
<div class="r" style="left:39px;top:169px;width:1px;height:751px;background:#c9cbcd;"></div>
<div class="r" style="left:975px;top:169px;width:1px;height:751px;background:#d5d9de;"></div>
<div class="r" style="left:39px;top:919px;width:937px;height:1px;background:#c9cbcd;"></div>
<div class="r" style="left:42px;top:909px;width:346px;height:8px;border-radius:4px;background:#bdbdbd"></div>
<div class="r" style="left:980px;top:169px;width:938px;height:1px;background:#c9cbcd;"></div>
<div class="r" style="left:981px;top:170px;width:936px;height:36px;background:#f3f3f4;"></div>
<div class="r" style="left:980px;top:206px;width:938px;height:1px;background:#c5c8cb;"></div>
<div class="r" style="left:1306px;top:170px;width:1px;height:36px;background:#e0e1e3;"></div>
<div class="r" style="left:1456px;top:170px;width:1px;height:36px;background:#e0e1e3;"></div>
<div class="r" style="left:1606px;top:170px;width:1px;height:36px;background:#e0e1e3;"></div>
<div class="r" style="left:1756px;top:170px;width:1px;height:36px;background:#e0e1e3;"></div>
<div class="r" style="left:1906px;top:170px;width:1px;height:36px;background:#e0e1e3;"></div>
<div class="t" style="left:993.4px;top:181.67px;font-size:12.2px;color:#3a3a3a;font-weight:400;overflow:hidden;max-width:923.6px">ID</div>
<div class="t" style="left:1312.7px;top:181.93px;font-size:11.9px;color:#3a3a3a;font-weight:400;overflow:hidden;max-width:604.3px">Name</div>
<div class="t" style="left:1462.5px;top:181.50px;font-size:12.4px;color:#3a3a3a;font-weight:400;overflow:hidden;max-width:454.5px">Baseline start date</div>
<div class="t" style="left:1612.8px;top:181.76px;font-size:12.1px;color:#3a3a3a;font-weight:400;overflow:hidden;max-width:304.20000000000005px">Baseline end date</div>
<div class="t" style="left:1763px;top:181.67px;font-size:12.2px;color:#3a3a3a;font-weight:400;overflow:hidden;max-width:154px">Baseline duration</div>
<div class="t" style="left:1912px;top:181.67px;font-size:12.2px;color:#3a3a3a;font-weight:400;overflow:hidden;max-width:5px">Start</div>
<div class="r" style="left:981px;top:207px;width:6px;height:8px;background:#f9b848;"></div>
<div class="r" style="left:1457px;top:207px;width:300px;height:8px;background:#fdf3d7;"></div>
<div class="r" style="left:981px;top:215px;width:924px;height:1px;background:#dcdddf;"></div>
<div class="r" style="left:981px;top:216px;width:6px;height:35px;background:#f9b848;"></div>
<div class="r" style="left:1457px;top:216px;width:300px;height:35px;background:#fdf3d7;"></div>
<div class="r" style="left:981px;top:251px;width:924px;height:1px;background:#dcdddf;"></div>
<svg style="left:1112.6px;top:225.4px" width="15" height="14" viewBox="0 0 15 14"><path d="M4.2,3.2 L4.2,1.6 C4.2,0.6 4.8,0 5.8,0 L9.2,0 C10.2,0 10.8,0.6 10.8,1.6 L10.8,3.2 L9.4,3.2 L9.4,1.4 L5.6,1.4 L5.6,3.2 Z" fill="rgba(0,0,0,0.62)"/><rect x="0" y="2.9" width="14.8" height="10.3" rx="1.6" fill="rgba(0,0,0,0.62)"/></svg>
<div class="t" style="left:1135.5px;top:226.64px;font-size:12px;color:#222;font-weight:400;">83</div>
<div class="t" style="left:1320px;top:229.93px;font-size:11.9px;color:#222;font-weight:400;">Level 3 Plumbing rise…</div>
<div class="t" style="left:1470px;top:228.62px;font-size:12.5px;color:#222;font-weight:400;">05/15/2023 8:00 AM</div>
<div class="t" style="left:1620px;top:228.62px;font-size:12.5px;color:#222;font-weight:400;">05/23/2023 5:00 PM</div>
<div class="t" style="left:1770px;top:228.62px;font-size:12.5px;color:#222;font-weight:400;">7</div>
<div class="r" style="left:981px;top:252px;width:6px;height:35px;background:#f9b848;"></div>
<div class="r" style="left:1457px;top:252px;width:300px;height:35px;background:#fdf3d7;"></div>
<div class="r" style="left:981px;top:287px;width:924px;height:1px;background:#dcdddf;"></div>
<svg style="left:1112.6px;top:261.4px" width="15" height="14" viewBox="0 0 15 14"><path d="M4.2,3.2 L4.2,1.6 C4.2,0.6 4.8,0 5.8,0 L9.2,0 C10.2,0 10.8,0.6 10.8,1.6 L10.8,3.2 L9.4,3.2 L9.4,1.4 L5.6,1.4 L5.6,3.2 Z" fill="rgba(0,0,0,0.62)"/><rect x="0" y="2.9" width="14.8" height="10.3" rx="1.6" fill="rgba(0,0,0,0.62)"/></svg>
<div class="t" style="left:1135.5px;top:262.64px;font-size:12px;color:#222;font-weight:400;">84</div>
<div class="t" style="left:1320px;top:265.93px;font-size:11.9px;color:#222;font-weight:400;">Basement Plumbing …</div>
<div class="t" style="left:1470px;top:264.62px;font-size:12.5px;color:#222;font-weight:400;">04/14/2023 8:00 AM</div>
<div class="t" style="left:1620px;top:264.62px;font-size:12.5px;color:#222;font-weight:400;">04/24/2023 5:00 PM</div>
<div class="t" style="left:1770px;top:264.62px;font-size:12.5px;color:#222;font-weight:400;">7</div>
<div class="r" style="left:981px;top:288px;width:924px;height:35px;background:#e2f2da;"></div>
<div class="r" style="left:981px;top:288px;width:6px;height:35px;background:#6cb84f;"></div>
<div class="r" style="left:981px;top:323px;width:924px;height:1px;background:#dcdddf;"></div>
<div class="t" style="left:1105.3px;top:298.44px;font-size:12px;color:#222;font-weight:400;">-</div>
<div class="t" style="left:1320px;top:301.04px;font-size:12px;color:#222;font-weight:400;">-</div>
<div class="t" style="left:1470px;top:300.62px;font-size:12.5px;color:#222;font-weight:400;">-</div>
<div class="t" style="left:1620px;top:300.62px;font-size:12.5px;color:#222;font-weight:400;">-</div>
<div class="t" style="left:1770px;top:300.62px;font-size:12.5px;color:#222;font-weight:400;">-</div>
<div class="r" style="left:981px;top:324px;width:924px;height:35px;background:#e2f2da;"></div>
<div class="r" style="left:981px;top:324px;width:6px;height:35px;background:#6cb84f;"></div>
<div class="r" style="left:981px;top:359px;width:924px;height:1px;background:#dcdddf;"></div>
<div class="t" style="left:1105.3px;top:334.44px;font-size:12px;color:#222;font-weight:400;">-</div>
<div class="t" style="left:1320px;top:337.04px;font-size:12px;color:#222;font-weight:400;">-</div>
<div class="t" style="left:1470px;top:336.62px;font-size:12.5px;color:#222;font-weight:400;">-</div>
<div class="t" style="left:1620px;top:336.62px;font-size:12.5px;color:#222;font-weight:400;">-</div>
<div class="t" style="left:1770px;top:336.62px;font-size:12.5px;color:#222;font-weight:400;">-</div>
<div class="r" style="left:981px;top:360px;width:924px;height:35px;background:#e2f2da;"></div>
<div class="r" style="left:981px;top:360px;width:6px;height:35px;background:#6cb84f;"></div>
<div class="r" style="left:981px;top:395px;width:924px;height:1px;background:#dcdddf;"></div>
<div class="t" style="left:1105.3px;top:370.44px;font-size:12px;color:#222;font-weight:400;">-</div>
<div class="t" style="left:1320px;top:373.04px;font-size:12px;color:#222;font-weight:400;">-</div>
<div class="t" style="left:1470px;top:372.62px;font-size:12.5px;color:#222;font-weight:400;">-</div>
<div class="t" style="left:1620px;top:372.62px;font-size:12.5px;color:#222;font-weight:400;">-</div>
<div class="t" style="left:1770px;top:372.62px;font-size:12.5px;color:#222;font-weight:400;">-</div>
<div class="r" style="left:981px;top:396px;width:6px;height:35px;background:#f9b848;"></div>
<div class="r" style="left:981px;top:431px;width:924px;height:1px;background:#dcdddf;"></div>
<svg style="left:1065.3px;top:413.6px" width="8" height="5" viewBox="0 0 8 5"><polyline points="0.6,0.6 4,4 7.4,0.6" fill="none" stroke="#7d8fa3" stroke-width="1.1"/></svg>
<svg style="left:1091.5px;top:405.4px" width="16" height="16" viewBox="0 0 16 16"><rect x="5.6" y="0" width="3.7" height="3.7" rx="1.3" fill="#666"/><rect x="6.75" y="2" width="1.4" height="10" fill="#666"/><path d="M1.9,11.5 L1.9,8.9 Q1.9,7.9 2.9,7.9 L12,7.9 Q13,7.9 13,8.9 L13,11.5" fill="none" stroke="#666" stroke-width="1.4"/><rect x="0" y="11" width="3.9" height="3.9" rx="1.3" fill="#666"/><rect x="5.5" y="11" width="3.9" height="3.9" rx="1.3" fill="#666"/><rect x="11" y="11" width="3.9" height="3.9" rx="1.3" fill="#666"/></svg>
<div class="t" style="left:1115px;top:408.84px;font-size:12px;color:#222;font-weight:400;">1.3.3.6</div>
<div class="t" style="left:1320px;top:409.93px;font-size:11.9px;color:#222;font-weight:400;">Plumbing Fixtures</div>
<div class="t" style="left:1470px;top:408.62px;font-size:12.5px;color:#222;font-weight:400;">-</div>
<div class="t" style="left:1620px;top:408.62px;font-size:12.5px;color:#222;font-weight:400;">-</div>
<div class="t" style="left:1770px;top:408.62px;font-size:12.5px;color:#222;font-weight:400;">-</div>
<div class="r" style="left:981px;top:432px;width:6px;height:35px;background:#f9b848;"></div>
<div class="r" style="left:1457px;top:432px;width:300px;height:35px;background:#fdf3d7;"></div>
<div class="r" style="left:981px;top:467px;width:924px;height:1px;background:#dcdddf;"></div>
<svg style="left:1112.6px;top:441.4px" width="15" height="14" viewBox="0 0 15 14"><path d="M4.2,3.2 L4.2,1.6 C4.2,0.6 4.8,0 5.8,0 L9.2,0 C10.2,0 10.8,0.6 10.8,1.6 L10.8,3.2 L9.4,3.2 L9.4,1.4 L5.6,1.4 L5.6,3.2 Z" fill="rgba(0,0,0,0.62)"/><rect x="0" y="2.9" width="14.8" height="10.3" rx="1.6" fill="rgba(0,0,0,0.62)"/></svg>
<div class="t" style="left:1135.5px;top:442.64px;font-size:12px;color:#222;font-weight:400;">87</div>
<div class="t" style="left:1320px;top:445.93px;font-size:11.9px;color:#222;font-weight:400;">Level 1 Plumbing fixt…</div>
<div class="t" style="left:1470px;top:444.62px;font-size:12.5px;color:#222;font-weight:400;">05/04/2023 8:00 AM</div>
<div class="t" style="left:1620px;top:444.62px;font-size:12.5px;color:#222;font-weight:400;">05/09/2023 5:00 PM</div>
<div class="t" style="left:1770px;top:444.62px;font-size:12.5px;color:#222;font-weight:400;">4</div>
<div class="r" style="left:981px;top:468px;width:6px;height:35px;background:#f9b848;"></div>
<div class="r" style="left:1457px;top:468px;width:300px;height:35px;background:#fdf3d7;"></div>
<div class="r" style="left:981px;top:503px;width:924px;height:1px;background:#dcdddf;"></div>
<svg style="left:1112.6px;top:477.4px" width="15" height="14" viewBox="0 0 15 14"><path d="M4.2,3.2 L4.2,1.6 C4.2,0.6 4.8,0 5.8,0 L9.2,0 C10.2,0 10.8,0.6 10.8,1.6 L10.8,3.2 L9.4,3.2 L9.4,1.4 L5.6,1.4 L5.6,3.2 Z" fill="rgba(0,0,0,0.62)"/><rect x="0" y="2.9" width="14.8" height="10.3" rx="1.6" fill="rgba(0,0,0,0.62)"/></svg>
<div class="t" style="left:1135.5px;top:478.64px;font-size:12px;color:#222;font-weight:400;">88</div>
<div class="t" style="left:1320px;top:481.93px;font-size:11.9px;color:#222;font-weight:400;">Level 2 Plumbing fixt…</div>
<div class="t" style="left:1470px;top:480.62px;font-size:12.5px;color:#222;font-weight:400;">05/15/2023 8:00 AM</div>
<div class="t" style="left:1620px;top:480.62px;font-size:12.5px;color:#222;font-weight:400;">05/18/2023 5:00 PM</div>
<div class="t" style="left:1770px;top:480.62px;font-size:12.5px;color:#222;font-weight:400;">4</div>
<div class="r" style="left:981px;top:504px;width:6px;height:35px;background:#f9b848;"></div>
<div class="r" style="left:1457px;top:504px;width:300px;height:35px;background:#fdf3d7;"></div>
<div class="r" style="left:981px;top:539px;width:924px;height:1px;background:#dcdddf;"></div>
<svg style="left:1112.6px;top:513.4px" width="15" height="14" viewBox="0 0 15 14"><path d="M4.2,3.2 L4.2,1.6 C4.2,0.6 4.8,0 5.8,0 L9.2,0 C10.2,0 10.8,0.6 10.8,1.6 L10.8,3.2 L9.4,3.2 L9.4,1.4 L5.6,1.4 L5.6,3.2 Z" fill="rgba(0,0,0,0.62)"/><rect x="0" y="2.9" width="14.8" height="10.3" rx="1.6" fill="rgba(0,0,0,0.62)"/></svg>
<div class="t" style="left:1135.5px;top:514.64px;font-size:12px;color:#222;font-weight:400;">90</div>
<div class="t" style="left:1320px;top:517.93px;font-size:11.9px;color:#222;font-weight:400;">Level 3 Plumbing fixt…</div>
<div class="t" style="left:1470px;top:516.62px;font-size:12.5px;color:#222;font-weight:400;">05/24/2023 8:00 AM</div>
<div class="t" style="left:1620px;top:516.62px;font-size:12.5px;color:#222;font-weight:400;">05/29/2023 5:00 PM</div>
<div class="t" style="left:1770px;top:516.62px;font-size:12.5px;color:#222;font-weight:400;">4</div>
<div class="r" style="left:981px;top:540px;width:6px;height:35px;background:#f9b848;"></div>
<div class="r" style="left:1457px;top:540px;width:300px;height:35px;background:#fdf3d7;"></div>
<div class="r" style="left:981px;top:575px;width:924px;height:1px;background:#dcdddf;"></div>
<svg style="left:1112.6px;top:549.4px" width="15" height="14" viewBox="0 0 15 14"><path d="M4.2,3.2 L4.2,1.6 C4.2,0.6 4.8,0 5.8,0 L9.2,0 C10.2,0 10.8,0.6 10.8,1.6 L10.8,3.2 L9.4,3.2 L9.4,1.4 L5.6,1.4 L5.6,3.2 Z" fill="rgba(0,0,0,0.62)"/><rect x="0" y="2.9" width="14.8" height="10.3" rx="1.6" fill="rgba(0,0,0,0.62)"/></svg>
<div class="t" style="left:1135.5px;top:550.64px;font-size:12px;color:#222;font-weight:400;">91</div>
<div class="t" style="left:1320px;top:553.93px;font-size:11.9px;color:#222;font-weight:400;">Level 4 Plumbing fixt…</div>
<div class="t" style="left:1470px;top:552.62px;font-size:12.5px;color:#222;font-weight:400;">06/02/2023 8:00 AM</div>
<div class="t" style="left:1620px;top:552.62px;font-size:12.5px;color:#222;font-weight:400;">06/07/2023 5:00 PM</div>
<div class="t" style="left:1770px;top:552.62px;font-size:12.5px;color:#222;font-weight:400;">4</div>
<div class="r" style="left:981px;top:576px;width:6px;height:35px;background:#f9b848;"></div>
<div class="r" style="left:1457px;top:576px;width:300px;height:35px;background:#fdf3d7;"></div>
<div class="r" style="left:981px;top:611px;width:924px;height:1px;background:#dcdddf;"></div>
<svg style="left:1112.6px;top:585.4px" width="15" height="14" viewBox="0 0 15 14"><path d="M4.2,3.2 L4.2,1.6 C4.2,0.6 4.8,0 5.8,0 L9.2,0 C10.2,0 10.8,0.6 10.8,1.6 L10.8,3.2 L9.4,3.2 L9.4,1.4 L5.6,1.4 L5.6,3.2 Z" fill="rgba(0,0,0,0.62)"/><rect x="0" y="2.9" width="14.8" height="10.3" rx="1.6" fill="rgba(0,0,0,0.62)"/></svg>
<div class="t" style="left:1135.5px;top:586.64px;font-size:12px;color:#222;font-weight:400;">92</div>
<div class="t" style="left:1320px;top:589.93px;font-size:11.9px;color:#222;font-weight:400;">Level 5 Plumbing fixt…</div>
<div class="t" style="left:1470px;top:588.62px;font-size:12.5px;color:#222;font-weight:400;">06/13/2023 8:00 AM</div>
<div class="t" style="left:1620px;top:588.62px;font-size:12.5px;color:#222;font-weight:400;">06/16/2023 5:00 PM</div>
<div class="t" style="left:1770px;top:588.62px;font-size:12.5px;color:#222;font-weight:400;">4</div>
<div class="r" style="left:981px;top:612px;width:6px;height:35px;background:#f9b848;"></div>
<div class="r" style="left:1457px;top:612px;width:300px;height:35px;background:#fdf3d7;"></div>
<div class="r" style="left:981px;top:647px;width:924px;height:1px;background:#dcdddf;"></div>
<svg style="left:1112.6px;top:621.4px" width="15" height="14" viewBox="0 0 15 14"><path d="M4.2,3.2 L4.2,1.6 C4.2,0.6 4.8,0 5.8,0 L9.2,0 C10.2,0 10.8,0.6 10.8,1.6 L10.8,3.2 L9.4,3.2 L9.4,1.4 L5.6,1.4 L5.6,3.2 Z" fill="rgba(0,0,0,0.62)"/><rect x="0" y="2.9" width="14.8" height="10.3" rx="1.6" fill="rgba(0,0,0,0.62)"/></svg>
<div class="t" style="left:1135.5px;top:622.64px;font-size:12px;color:#222;font-weight:400;">93</div>
<div class="t" style="left:1320px;top:625.93px;font-size:11.9px;color:#222;font-weight:400;">Basement Plumbing …</div>
<div class="t" style="left:1470px;top:624.62px;font-size:12.5px;color:#222;font-weight:400;">04/25/2023 8:00 AM</div>
<div class="t" style="left:1620px;top:624.62px;font-size:12.5px;color:#222;font-weight:400;">04/28/2023 5:00 PM</div>
<div class="t" style="left:1770px;top:624.62px;font-size:12.5px;color:#222;font-weight:400;">4</div>
<div class="r" style="left:981px;top:648px;width:6px;height:35px;background:#f9b848;"></div>
<div class="r" style="left:981px;top:683px;width:924px;height:1px;background:#dcdddf;"></div>
<svg style="left:1044.3px;top:665.6px" width="8" height="5" viewBox="0 0 8 5"><polyline points="0.6,0.6 4,4 7.4,0.6" fill="none" stroke="#7d8fa3" stroke-width="1.1"/></svg>
<svg style="left:1070.5px;top:657.4px" width="16" height="16" viewBox="0 0 16 16"><rect x="5.6" y="0" width="3.7" height="3.7" rx="1.3" fill="#666"/><rect x="6.75" y="2" width="1.4" height="10" fill="#666"/><path d="M1.9,11.5 L1.9,8.9 Q1.9,7.9 2.9,7.9 L12,7.9 Q13,7.9 13,8.9 L13,11.5" fill="none" stroke="#666" stroke-width="1.4"/><rect x="0" y="11" width="3.9" height="3.9" rx="1.3" fill="#666"/><rect x="5.5" y="11" width="3.9" height="3.9" rx="1.3" fill="#666"/><rect x="11" y="11" width="3.9" height="3.9" rx="1.3" fill="#666"/></svg>
<div class="t" style="left:1094px;top:660.84px;font-size:12px;color:#222;font-weight:400;">1.3.4</div>
<div class="t" style="left:1320px;top:661.93px;font-size:11.9px;color:#222;font-weight:400;">Electrical</div>
<div class="t" style="left:1470px;top:660.62px;font-size:12.5px;color:#222;font-weight:400;">-</div>
<div class="t" style="left:1620px;top:660.62px;font-size:12.5px;color:#222;font-weight:400;">-</div>
<div class="t" style="left:1770px;top:660.62px;font-size:12.5px;color:#222;font-weight:400;">-</div>
<div class="r" style="left:981px;top:684px;width:6px;height:35px;background:#f9b848;"></div>
<div class="r" style="left:1457px;top:684px;width:300px;height:35px;background:#fdf3d7;"></div>
<div class="r" style="left:981px;top:719px;width:924px;height:1px;background:#dcdddf;"></div>
<svg style="left:1091.6px;top:693.4px" width="15" height="14" viewBox="0 0 15 14"><path d="M4.2,3.2 L4.2,1.6 C4.2,0.6 4.8,0 5.8,0 L9.2,0 C10.2,0 10.8,0.6 10.8,1.6 L10.8,3.2 L9.4,3.2 L9.4,1.4 L5.6,1.4 L5.6,3.2 Z" fill="rgba(0,0,0,0.62)"/><rect x="0" y="2.9" width="14.8" height="10.3" rx="1.6" fill="rgba(0,0,0,0.62)"/></svg>
<div class="t" style="left:1114.5px;top:694.64px;font-size:12px;color:#222;font-weight:400;">95</div>
<div class="t" style="left:1320px;top:697.93px;font-size:11.9px;color:#222;font-weight:400;">Electrical Fixtures- B…</div>
<div class="t" style="left:1470px;top:696.62px;font-size:12.5px;color:#222;font-weight:400;">04/12/2023 8:00 AM</div>
<div class="t" style="left:1620px;top:696.62px;font-size:12.5px;color:#222;font-weight:400;">04/17/2023 5:00 PM</div>
<div class="t" style="left:1770px;top:696.62px;font-size:12.5px;color:#222;font-weight:400;">4</div>
<div class="r" style="left:981px;top:720px;width:6px;height:35px;background:#f9b848;"></div>
<div class="r" style="left:1457px;top:720px;width:300px;height:35px;background:#fdf3d7;"></div>
<div class="r" style="left:981px;top:755px;width:924px;height:1px;background:#dcdddf;"></div>
<svg style="left:1091.6px;top:729.4px" width="15" height="14" viewBox="0 0 15 14"><path d="M4.2,3.2 L4.2,1.6 C4.2,0.6 4.8,0 5.8,0 L9.2,0 C10.2,0 10.8,0.6 10.8,1.6 L10.8,3.2 L9.4,3.2 L9.4,1.4 L5.6,1.4 L5.6,3.2 Z" fill="rgba(0,0,0,0.62)"/><rect x="0" y="2.9" width="14.8" height="10.3" rx="1.6" fill="rgba(0,0,0,0.62)"/></svg>
<div class="t" style="left:1114.5px;top:730.64px;font-size:12px;color:#222;font-weight:400;">96</div>
<div class="t" style="left:1320px;top:733.93px;font-size:11.9px;color:#222;font-weight:400;">Electrical Fixtures- L…</div>
<div class="t" style="left:1470px;top:732.62px;font-size:12.5px;color:#222;font-weight:400;">04/18/2023 8:00 AM</div>
<div class="t" style="left:1620px;top:732.62px;font-size:12.5px;color:#222;font-weight:400;">04/24/2023 5:00 PM</div>
<div class="t" style="left:1770px;top:732.62px;font-size:12.5px;color:#222;font-weight:400;">5</div>
<div class="r" style="left:981px;top:756px;width:6px;height:35px;background:#f9b848;"></div>
<div class="r" style="left:1457px;top:756px;width:300px;height:35px;background:#fdf3d7;"></div>
<div class="r" style="left:981px;top:791px;width:924px;height:1px;background:#dcdddf;"></div>
<svg style="left:1091.6px;top:765.4px" width="15" height="14" viewBox="0 0 15 14"><path d="M4.2,3.2 L4.2,1.6 C4.2,0.6 4.8,0 5.8,0 L9.2,0 C10.2,0 10.8,0.6 10.8,1.6 L10.8,3.2 L9.4,3.2 L9.4,1.4 L5.6,1.4 L5.6,3.2 Z" fill="rgba(0,0,0,0.62)"/><rect x="0" y="2.9" width="14.8" height="10.3" rx="1.6" fill="rgba(0,0,0,0.62)"/></svg>
<div class="t" style="left:1114.5px;top:766.64px;font-size:12px;color:#222;font-weight:400;">97</div>
<div class="t" style="left:1320px;top:769.93px;font-size:11.9px;color:#222;font-weight:400;">Electrical Fixtures- L…</div>
<div class="t" style="left:1470px;top:768.62px;font-size:12.5px;color:#222;font-weight:400;">04/25/2023 8:00 AM</div>
<div class="t" style="left:1620px;top:768.62px;font-size:12.5px;color:#222;font-weight:400;">05/01/2023 5:00 PM</div>
<div class="t" style="left:1770px;top:768.62px;font-size:12.5px;color:#222;font-weight:400;">5</div>
<div class="r" style="left:981px;top:792px;width:924px;height:35px;background:#fcdcd8;"></div>
<div class="r" style="left:981px;top:792px;width:6px;height:35px;background:#ef4427;"></div>
<div class="r" style="left:981px;top:827px;width:924px;height:1px;background:#dcdddf;"></div>
<svg style="left:1091.6px;top:801.4px" width="15" height="14" viewBox="0 0 15 14"><path d="M4.2,3.2 L4.2,1.6 C4.2,0.6 4.8,0 5.8,0 L9.2,0 C10.2,0 10.8,0.6 10.8,1.6 L10.8,3.2 L9.4,3.2 L9.4,1.4 L5.6,1.4 L5.6,3.2 Z" fill="rgba(0,0,0,0.62)"/><rect x="0" y="2.9" width="14.8" height="10.3" rx="1.6" fill="rgba(0,0,0,0.62)"/></svg>
<div class="t" style="left:1114.5px;top:802.64px;font-size:12px;color:#222;font-weight:400;">98</div>
<div class="t" style="left:1320px;top:805.93px;font-size:11.9px;color:#222;font-weight:400;">Electrical Fixtures- L…</div>
<div class="t" style="left:1470px;top:804.62px;font-size:12.5px;color:#222;font-weight:400;">05/02/2023 8:00 AM</div>
<div class="t" style="left:1620px;top:804.62px;font-size:12.5px;color:#222;font-weight:400;">05/08/2023 5:00 PM</div>
<div class="t" style="left:1770px;top:804.62px;font-size:12.5px;color:#222;font-weight:400;">5</div>
<div class="r" style="left:981px;top:828px;width:924px;height:35px;background:#fcdcd8;"></div>
<div class="r" style="left:981px;top:828px;width:6px;height:35px;background:#ef4427;"></div>
<div class="r" style="left:981px;top:863px;width:924px;height:1px;background:#dcdddf;"></div>
<svg style="left:1091.6px;top:837.4px" width="15" height="14" viewBox="0 0 15 14"><path d="M4.2,3.2 L4.2,1.6 C4.2,0.6 4.8,0 5.8,0 L9.2,0 C10.2,0 10.8,0.6 10.8,1.6 L10.8,3.2 L9.4,3.2 L9.4,1.4 L5.6,1.4 L5.6,3.2 Z" fill="rgba(0,0,0,0.62)"/><rect x="0" y="2.9" width="14.8" height="10.3" rx="1.6" fill="rgba(0,0,0,0.62)"/></svg>
<div class="t" style="left:1114.5px;top:838.64px;font-size:12px;color:#222;font-weight:400;">100</div>
<div class="t" style="left:1320px;top:841.93px;font-size:11.9px;color:#222;font-weight:400;">Electrical Fixtures- L…</div>
<div class="t" style="left:1470px;top:840.62px;font-size:12.5px;color:#222;font-weight:400;">05/09/2023 8:00 AM</div>
<div class="t" style="left:1620px;top:840.62px;font-size:12.5px;color:#222;font-weight:400;">05/15/2023 5:00 PM</div>
<div class="t" style="left:1770px;top:840.62px;font-size:12.5px;color:#222;font-weight:400;">5</div>
<div class="r" style="left:981px;top:864px;width:924px;height:35px;background:#fcdcd8;"></div>
<div class="r" style="left:981px;top:864px;width:6px;height:35px;background:#ef4427;"></div>
<div class="r" style="left:981px;top:899px;width:924px;height:1px;background:#dcdddf;"></div>
<svg style="left:1091.6px;top:873.4px" width="15" height="14" viewBox="0 0 15 14"><path d="M4.2,3.2 L4.2,1.6 C4.2,0.6 4.8,0 5.8,0 L9.2,0 C10.2,0 10.8,0.6 10.8,1.6 L10.8,3.2 L9.4,3.2 L9.4,1.4 L5.6,1.4 L5.6,3.2 Z" fill="rgba(0,0,0,0.62)"/><rect x="0" y="2.9" width="14.8" height="10.3" rx="1.6" fill="rgba(0,0,0,0.62)"/></svg>
<div class="t" style="left:1114.5px;top:874.64px;font-size:12px;color:#222;font-weight:400;">101</div>
<div class="t" style="left:1320px;top:877.93px;font-size:11.9px;color:#222;font-weight:400;">Electrical Fixtures- L…</div>
<div class="t" style="left:1470px;top:876.62px;font-size:12.5px;color:#222;font-weight:400;">05/16/2023 8:00 AM</div>
<div class="t" style="left:1620px;top:876.62px;font-size:12.5px;color:#222;font-weight:400;">05/22/2023 5:00 PM</div>
<div class="t" style="left:1770px;top:876.62px;font-size:12.5px;color:#222;font-weight:400;">5</div>
<div class="r" style="left:981px;top:900px;width:6px;height:7px;background:#f9b848;"></div>
<div class="r" style="left:986px;top:207px;width:1px;height:700px;background:rgba(200,203,207,0.55);"></div>
<div class="r" style="left:1306px;top:207px;width:1px;height:700px;background:rgba(200,203,207,0.55);"></div>
<div class="r" style="left:1456px;top:207px;width:1px;height:700px;background:rgba(200,203,207,0.55);"></div>
<div class="r" style="left:1606px;top:207px;width:1px;height:700px;background:rgba(200,203,207,0.55);"></div>
<div class="r" style="left:1756px;top:207px;width:1px;height:700px;background:rgba(200,203,207,0.55);"></div>
<div class="r" style="left:980px;top:169px;width:1px;height:751px;background:#c9cbcd;"></div>
<div class="r" style="left:1917px;top:169px;width:1px;height:751px;background:#c9cbcd;"></div>
<div class="r" style="left:980px;top:919px;width:938px;height:1px;background:#c9cbcd;"></div>
<div class="r" style="left:983px;top:909px;width:348px;height:8px;border-radius:4px;background:#bdbdbd"></div>
<div class="r" style="left:1907px;top:566px;width:8px;height:67px;border-radius:4px;background:#bdbdbd"></div>
<div class="r" style="left:1917px;top:127px;width:1px;height:42px;background:#d3d5d8;"></div>
<div class="r" style="left:977px;top:127px;width:4px;height:793px;background:#bcbcbc;"></div>
<div class="r" style="left:976px;top:127px;width:1px;height:793px;background:#d9dde1;"></div>
<div class="t" style="left:57.5px;top:935.01px;font-size:11.8px;color:#777">Unchanged: <span style="color:#222">3</span></div>
<div class="t" style="left:143.3px;top:935.01px;font-size:11.8px;color:#777">New: <span style="color:#222">3</span></div>
<div class="t" style="left:192.5px;top:935.01px;font-size:11.8px;color:#777">Removed: <span style="color:#222">21</span></div>
<div class="t" style="left:275px;top:935.01px;font-size:11.8px;color:#777;letter-spacing:0.3px">Modified: <span style="color:#222">169</span></div>
<div class="t" style="left:1727px;top:935.87px;font-size:10.2px;color:#222;font-weight:700;">Close</div>
<div class="r" style="left:1774px;top:927px;width:55px;height:25px;border:1px solid #444;border-radius:4px;background:#fff"></div>
<div class="t" style="left:1787.7px;top:935.36px;font-size:10.8px;color:#222;font-weight:400;-webkit-text-stroke:0.25px #222">Reject</div>
<div class="r" style="left:1840px;top:927px;width:65px;height:27px;border-radius:4px;background:#2897bc;box-shadow:0 1px 1px rgba(0,0,0,0.15)"></div>
<div class="t" style="left:1853px;top:933.92px;font-size:9.9px;color:#fff;font-weight:700;">Approve</div>
</body></html>
